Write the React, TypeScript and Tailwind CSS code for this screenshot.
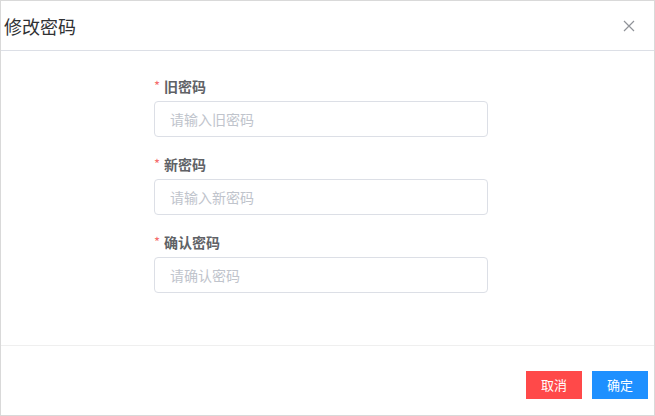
import React from "react";

const fields = [
  { label: "旧密码", placeholder: "请输入旧密码" },
  { label: "新密码", placeholder: "请输入新密码" },
  { label: "确认密码", placeholder: "请确认密码" },
];

export default function App() {
  return (
    <div
      className="w-[655px] h-[416px] flex flex-col border border-[#d9d9d9] bg-white"
      style={{ fontFamily: '"Noto Sans CJK SC", "Noto Sans", sans-serif' }}
    >
      <div className="h-[50px] shrink-0 flex items-center justify-between border-b border-[#dcdfe6] pl-[3px] pr-[19px]">
        <span className="text-[18px] leading-none text-[#303133]">修改密码</span>
        <svg width="12" height="12" viewBox="0 0 12 12" className="mt-[1px]">
          <path d="M1 1 L11 11 M11 1 L1 11" stroke="#909399" strokeWidth="1.2" />
        </svg>
      </div>
      <div className="h-[294px] shrink-0 pt-[25px] pl-[153px]">
        {fields.map((f) => (
          <div key={f.label} className="w-[334px] mb-[17px]">
            <div className="h-[20px] flex items-center text-[14px] font-bold text-[#606266]">
              <span className="text-[#f56c6c] mr-[4px] font-normal text-[13px]">*</span>
              {f.label}
            </div>
            <input
              className="mt-[5px] w-[334px] h-[36px] border border-[#dcdfe6] rounded-[4px] px-[15px] text-[14px] outline-none placeholder:text-[#c0c4cc]"
              placeholder={f.placeholder}
            />
          </div>
        ))}
      </div>
      <div className="flex-1 border-t border-[#efefef] flex justify-end items-start pt-[25px] pr-[6px] gap-[10px]">
        <button className="w-[56px] h-[28px] bg-[#ff4949] text-white text-[13px]">取消</button>
        <button className="w-[56px] h-[28px] bg-[#1e90ff] text-white text-[13px]">确定</button>
      </div>
    </div>
  );
}
